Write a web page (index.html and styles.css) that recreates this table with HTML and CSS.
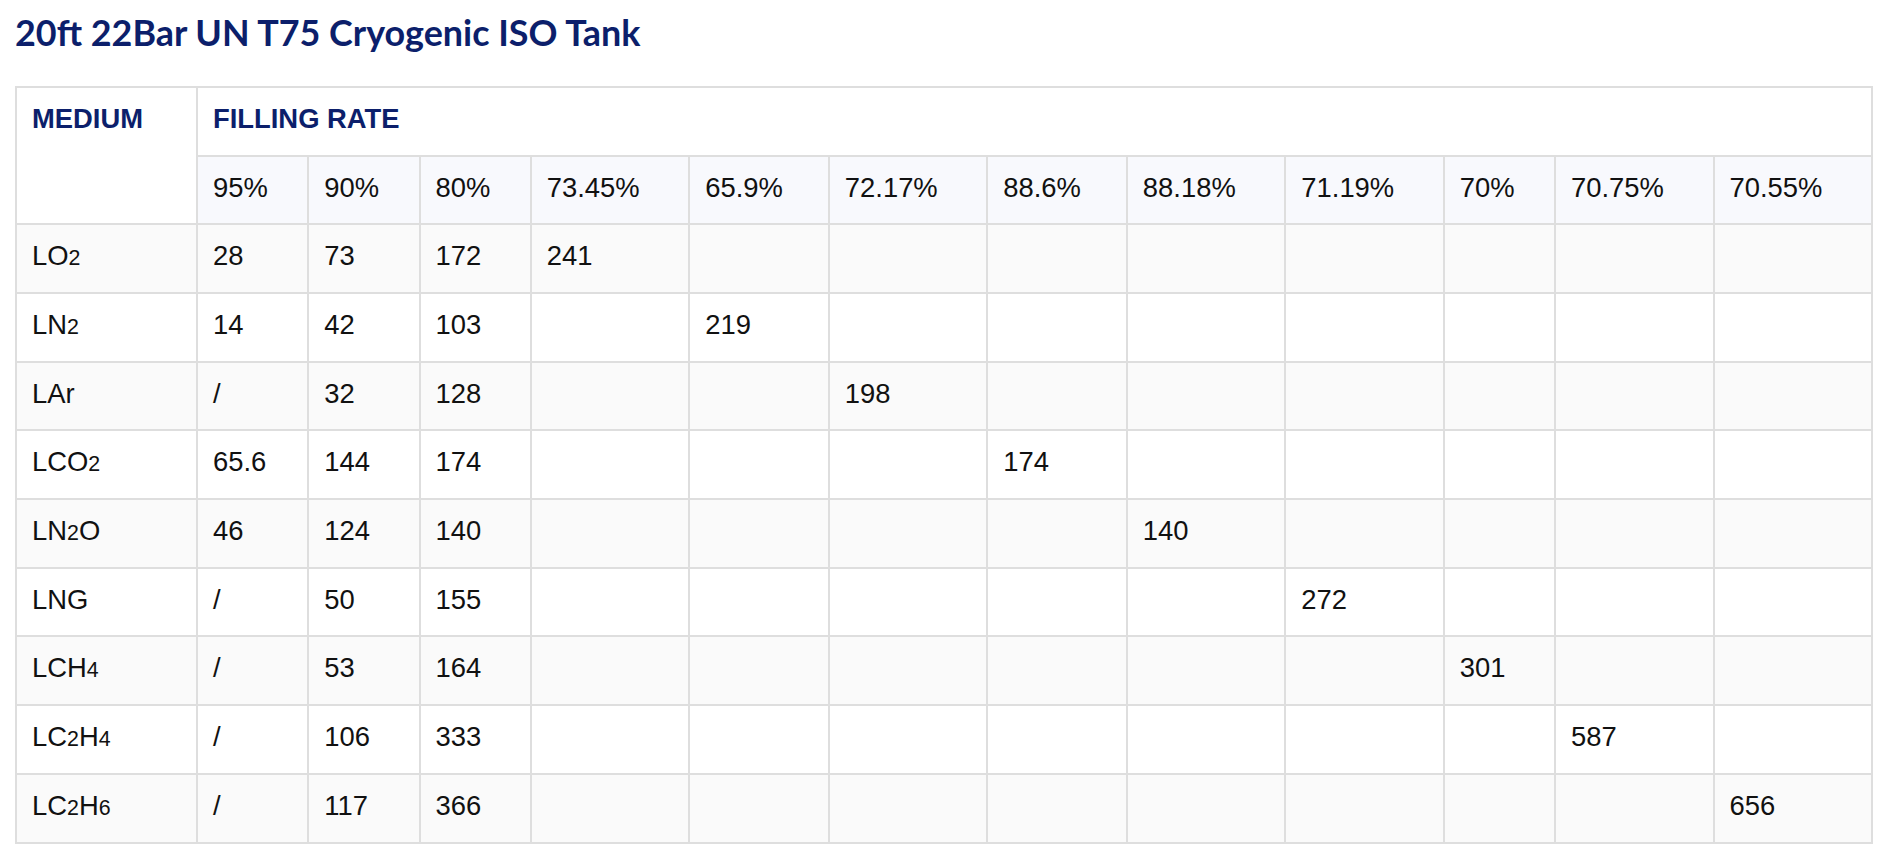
FILE: index.html
```html
<!DOCTYPE html>
<html lang="en">
<head>
<meta charset="utf-8">
<title>20ft 22Bar UN T75 Cryogenic ISO Tank</title>
<link rel="stylesheet" href="styles.css">
</head>
<body>
<div class="page">
  <h2 class="title">20ft 22Bar UN T75 Cryogenic ISO Tank</h2>
  <table class="spec">
    <thead>
      <tr class="head-top">
        <th rowspan="2" class="medium">MEDIUM</th>
        <th colspan="12">FILLING RATE</th>
      </tr>
      <tr class="head-rates">
        <td>95%</td><td>90%</td><td>80%</td><td>73.45%</td><td>65.9%</td><td>72.17%</td><td>88.6%</td><td>88.18%</td><td>71.19%</td><td>70%</td><td>70.75%</td><td>70.55%</td>
      </tr>
    </thead>
    <tbody>
      <tr><td>LO<span class="sub">2</span></td><td>28</td><td>73</td><td>172</td><td>241</td><td></td><td></td><td></td><td></td><td></td><td></td><td></td><td></td></tr>
      <tr><td>LN<span class="sub">2</span></td><td>14</td><td>42</td><td>103</td><td></td><td>219</td><td></td><td></td><td></td><td></td><td></td><td></td><td></td></tr>
      <tr><td>LAr</td><td>/</td><td>32</td><td>128</td><td></td><td></td><td>198</td><td></td><td></td><td></td><td></td><td></td><td></td></tr>
      <tr><td>LCO<span class="sub">2</span></td><td>65.6</td><td>144</td><td>174</td><td></td><td></td><td></td><td>174</td><td></td><td></td><td></td><td></td><td></td></tr>
      <tr><td>LN<span class="sub">2</span>O</td><td>46</td><td>124</td><td>140</td><td></td><td></td><td></td><td></td><td>140</td><td></td><td></td><td></td><td></td></tr>
      <tr><td>LNG</td><td>/</td><td>50</td><td>155</td><td></td><td></td><td></td><td></td><td></td><td>272</td><td></td><td></td><td></td></tr>
      <tr><td>LCH<span class="sub">4</span></td><td>/</td><td>53</td><td>164</td><td></td><td></td><td></td><td></td><td></td><td></td><td>301</td><td></td><td></td></tr>
      <tr><td>LC<span class="sub">2</span>H<span class="sub">4</span></td><td>/</td><td>106</td><td>333</td><td></td><td></td><td></td><td></td><td></td><td></td><td></td><td>587</td><td></td></tr>
      <tr><td>LC<span class="sub">2</span>H<span class="sub">6</span></td><td>/</td><td>117</td><td>366</td><td></td><td></td><td></td><td></td><td></td><td></td><td></td><td></td><td>656</td></tr>
    </tbody>
  </table>
</div>
</body>
</html>
```

FILE: styles.css
```css
html, body {
  margin: 0;
  padding: 0;
  background: #ffffff;
}

.page {
  padding: 0 19px 0 15px;
}

.title {
  margin: 0;
  padding-top: 10.6px;
  margin-bottom: 31.4px;
  font-family: "Lato", "Liberation Sans", sans-serif;
  font-weight: 700;
  font-size: 35.9px;
  line-height: 44px;
  color: #0c1f6b;
}

.spec {
  width: 100%;
  border-collapse: collapse;
  font-family: "Liberation Sans", Arial, sans-serif;
  font-size: 27.4px;
  color: #111111;
}

.spec th,
.spec td {
  border: 2px solid #dedede;
  padding: 15px 18px 19.7px 15px;
  text-align: left;
  vertical-align: middle;
  line-height: normal;
}

.spec th {
  font-weight: 700;
  color: #0c1f6b;
  background: #ffffff;
}

.spec th.medium {
  vertical-align: top;
}

.head-rates td {
  background: #f8f9fd;
}

.spec tbody tr:nth-child(odd) td {
  background: #fafafa;
}

.spec tbody tr:nth-child(even) td {
  background: #ffffff;
}

.sub {
  font-size: 0.78em;
}
```
